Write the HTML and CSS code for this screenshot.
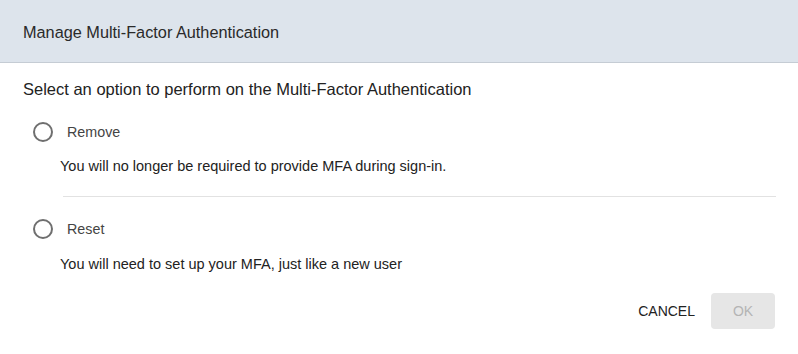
FILE: index.html
```html
<!DOCTYPE html>
<html>
<head>
<meta charset="utf-8">
<link rel="stylesheet" href="styles.css">
</head>
<body>
<div class="dialog">
  <div class="header">Manage Multi-Factor Authentication</div>
  <div class="content">
    <p class="prompt">Select an option to perform on the Multi-Factor Authentication</p>
    <div class="option first">
      <label class="choice"><span class="radio"></span><span class="label">Remove</span></label>
      <p class="desc">You will no longer be required to provide MFA during sign-in.</p>
    </div>
    <div class="divider"></div>
    <div class="option second">
      <label class="choice"><span class="radio"></span><span class="label">Reset</span></label>
      <p class="desc">You will need to set up your MFA, just like a new user</p>
    </div>
  </div>
  <div class="actions">
    <button class="btn cancel">CANCEL</button>
    <button class="btn ok" disabled>OK</button>
  </div>
</div>
</body>
</html>
```
FILE: styles.css
```css
html, body {
  margin: 0;
  padding: 0;
  background: #fff;
}
body {
  font-family: "Liberation Sans", Arial, sans-serif;
  color: #222;
}
.dialog {
  width: 798px;
  height: 354px;
  display: flex;
  flex-direction: column;
}
.header {
  height: 63px;
  flex: none;
  box-sizing: border-box;
  background: #dde4ec;
  border-bottom: 1px solid #c5ccd4;
  padding: 3px 23px 0;
  display: flex;
  align-items: center;
  font-size: 16.3px;
  color: #2a2a2a;
}
.content {
  padding: 16px 22px 0 23px;
}
.prompt {
  margin: 0;
  font-size: 16.5px;
  line-height: 20px;
  color: #222;
}
.option {
  padding-left: 10px;
}
.choice {
  display: flex;
  align-items: center;
  height: 20px;
  margin-top: 23px;
}
.radio {
  width: 16px;
  height: 16px;
  border: 2px solid #6f6f6f;
  border-radius: 50%;
  box-sizing: content-box;
}
.label {
  margin-left: 14px;
  font-size: 14.3px;
  color: #444;
}
.desc {
  margin: 15px 0 0 27px;
  font-size: 14.5px;
  line-height: 18px;
  color: #222;
}
.divider {
  height: 1px;
  background: #e2e2e2;
  margin: 21px 0 0 40px;
}
.second .choice {
  margin-top: 22px;
}
.second .desc {
  margin-top: 16px;
}
.actions {
  display: flex;
  justify-content: flex-end;
  align-items: center;
  gap: 16px;
  padding: 0 23px 0 0;
  margin-top: 20px;
}
.btn {
  font-family: "Liberation Sans", Arial, sans-serif;
  font-size: 14px;
  border: none;
  border-radius: 4px;
  height: 36px;
  background: transparent;
  padding: 0;
}
.cancel {
  color: #222;
}
.ok {
  width: 64px;
  background: #e6e6e6;
  color: #b4b4b4;
}
```
